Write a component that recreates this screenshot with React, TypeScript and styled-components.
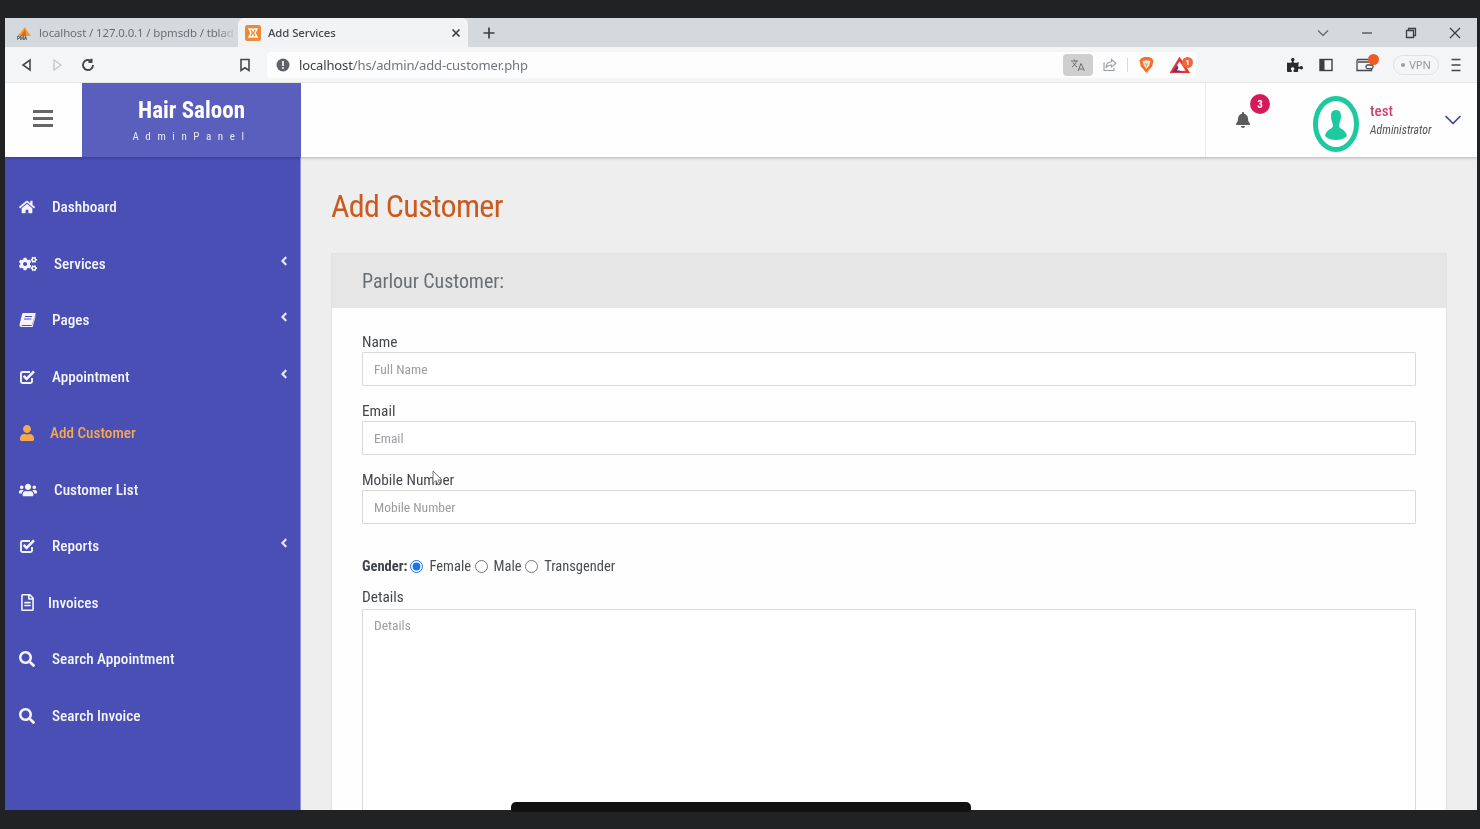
import React from 'react';
import styled, { createGlobalStyle } from 'styled-components';
import {
  FaAngleLeft,
  FaBell,
  FaCogs,
  FaHome,
  FaPuzzlePiece,
  FaRegFileAlt,
  FaSearch,
  FaUser,
  FaUsers,
} from 'react-icons/fa';
import { FiChevronDown } from 'react-icons/fi';

const GlobalStyle = createGlobalStyle`
  html, body {
    margin: 0;
    padding: 0;
    height: 100%;
    overflow: hidden;
    background: #202124;
  }
  * {
    box-sizing: border-box;
  }
`;

const Frame = styled.div`
  position: relative;
  width: 1480px;
  height: 829px;
  padding: 18px 3px 19px 5px;
  display: flex;
  flex-direction: column;
  background: #212224;
  overflow: hidden;
  filter: blur(0.35px);
`;

/* browser chrome */
const TabStrip = styled.div`
  height: 29px;
  flex: none;
  display: flex;
  align-items: stretch;
  background: #d3d9dc;
  font-family: 'Noto Sans', sans-serif;
  font-size: 11.4px;
  color: #45494d;
`;

const Tab = styled.div<{ $active?: boolean }>`
  width: ${(p) => (p.$active ? 230 : 233)}px;
  flex: none;
  display: flex;
  align-items: center;
  padding-left: ${(p) => (p.$active ? 7 : 11)}px;
  gap: 7px;
  background: ${(p) => (p.$active ? '#f1f3f4' : 'transparent')};
  border-radius: ${(p) => (p.$active ? '6px 6px 0 0' : '0')};
`;

const TabTitle = styled.span<{ $faded?: boolean }>`
  flex: 1;
  white-space: nowrap;
  letter-spacing: -0.1px;
  font-weight: ${(p) => (p.$faded ? 400 : 500)};
  color: ${(p) => (p.$faded ? '#6a6f74' : '#45494d')};
  ${(p) =>
    p.$faded &&
    'mask-image: linear-gradient(to right, #000 90%, transparent 99%);'}
`;

const TabClose = styled.span`
  width: 24px;
  flex: none;
  display: flex;
  justify-content: center;
  color: #33363a;
`;

const NewTab = styled.div`
  width: 42px;
  flex: none;
  display: flex;
  align-items: center;
  justify-content: center;
  color: #33363a;
`;

const StripSpacer = styled.div`
  flex: 1;
`;

const Slot = styled.div<{ $w: number }>`
  width: ${(p) => p.$w}px;
  flex: none;
  display: flex;
  align-items: center;
  justify-content: center;
  position: relative;
`;

const Toolbar = styled.div`
  height: 36px;
  flex: none;
  display: flex;
  align-items: center;
  padding-left: 7px;
  background: #f4f5f6;
  border-bottom: 1px solid #e4e6e8;
`;

const Omnibox = styled.div`
  width: 929px;
  height: 26px;
  flex: none;
  display: flex;
  align-items: center;
  padding-left: 9px;
  background: #fdfdfd;
  border-radius: 4px;
  font-family: 'Noto Sans', sans-serif;
  font-size: 13px;
  letter-spacing: -0.13px;
`;

const UrlHost = styled.span`
  margin-left: 9px;
  color: #3c4043;
`;

const UrlPath = styled.span`
  flex: 1;
  color: #70757a;
`;

const TranslateBtn = styled.div`
  width: 30px;
  height: 22px;
  flex: none;
  display: flex;
  align-items: center;
  justify-content: center;
  border-radius: 4px;
  background: #cfcfcf;
`;

const ToolSep = styled.div`
  width: 1px;
  height: 14px;
  flex: none;
  background: #d8d8d8;
`;

const Badge = styled.span<{ $size: number; $top: number; $right: number; $bg: string }>`
  position: absolute;
  top: ${(p) => p.$top}px;
  right: ${(p) => p.$right}px;
  width: ${(p) => p.$size}px;
  height: ${(p) => p.$size}px;
  border-radius: 50%;
  background: ${(p) => p.$bg};
  color: #fff;
  font-family: Roboto, sans-serif;
  font-size: ${(p) => (p.$size > 15 ? 11 : 8)}px;
  font-weight: 700;
  letter-spacing: 0;
  display: flex;
  align-items: center;
  justify-content: center;
`;

const VpnPill = styled.div`
  width: 46px;
  height: 20px;
  flex: none;
  display: flex;
  align-items: center;
  justify-content: center;
  gap: 4px;
  border: 1px solid #dfe1e3;
  border-radius: 10px;
  font-family: 'Noto Sans', sans-serif;
  font-size: 11px;
  color: #8f9499;
`;

const VpnDot = styled.span`
  width: 4px;
  height: 4px;
  border-radius: 50%;
  background: #9a9ea3;
`;

/* admin page */
const Page = styled.div`
  flex: 1;
  min-height: 0;
  display: flex;
  flex-direction: column;
  overflow: hidden;
  background: #eeeeee;
  font-family: Roboto, sans-serif;
  font-stretch: 75%;
`;

const TopBar = styled.header`
  height: 74px;
  flex: none;
  display: flex;
  background: #fefefe;
  box-shadow: 0 1px 3px rgba(0, 0, 0, 0.25);
  position: relative;
  z-index: 2;
`;

const MenuToggle = styled.div`
  width: 77px;
  flex: none;
  display: flex;
  align-items: center;
  justify-content: center;
  padding-right: 2px;
`;

const BurgerLines = styled.span`
  width: 20px;
  height: 17px;
  border-top: 3px solid #666;
  border-bottom: 3px solid #666;
  position: relative;
  margin-top: -3px;
  &::after {
    content: '';
    position: absolute;
    left: 0;
    right: 0;
    top: 4px;
    height: 3px;
    background: #666;
  }
`;

const Brand = styled.div`
  width: 219px;
  flex: none;
  display: flex;
  flex-direction: column;
  align-items: center;
  padding-top: 14px;
  background: #5a5fbd;
  color: #fff;
`;

const BrandName = styled.div`
  font-size: 23px;
  line-height: 27px;
  font-weight: 700;
`;

const BrandSub = styled.div`
  margin-top: 6px;
  font-size: 11px;
  line-height: 14px;
  letter-spacing: 6.6px;
  color: #e8e9f7;
`;

const TopBarFill = styled.div`
  flex: 1;
`;

const UserArea = styled.div`
  width: 272px;
  flex: none;
  display: flex;
  align-items: center;
  border-left: 1px solid #ececec;
`;

const BellWrap = styled.div`
  width: 76px;
  height: 100%;
  flex: none;
  position: relative;
  display: flex;
  align-items: center;
  justify-content: center;
  padding: 0 2px 0 0;
  color: #5c5c5c;
  font-size: 16px;
`;

const Avatar = styled.div`
  width: 46px;
  height: 56px;
  flex: none;
  margin-left: 31px;
  margin-top: 7px;
`;

const UserText = styled.div`
  width: 69px;
  flex: none;
  margin: -2px 0 0 11px;
`;

const UserName = styled.div`
  font-size: 15px;
  line-height: 20px;
  font-weight: 500;
  color: #c9446f;
`;

const UserRole = styled.div`
  margin-top: 1px;
  font-size: 11.8px;
  line-height: 16px;
  font-style: italic;
  white-space: nowrap;
  color: #555;
`;

const Body = styled.div`
  flex: 1;
  min-height: 0;
  display: flex;
`;

const Sidebar = styled.nav`
  width: 296px;
  flex: none;
  padding-top: 22px;
  background: #4a4fb5;
  border-right: 1px solid #8f92cf;
`;

const NavItem = styled.div<{ $active?: boolean }>`
  height: 56.5px;
  display: flex;
  align-items: center;
  padding: 0 14px;
  color: ${(p) => (p.$active ? '#f5a94f' : '#f4f5fc')};
`;

const NavIcon = styled.span`
  width: 18px;
  flex: none;
  display: flex;
  justify-content: flex-start;
`;

const NavLabel = styled.span<{ $offset: number }>`
  flex: 1;
  margin-left: ${(p) => p.$offset}px;
  font-size: 15.2px;
  font-weight: 500;
  white-space: nowrap;
`;

const NavCaret = styled.span`
  width: 12px;
  flex: none;
  display: flex;
  justify-content: center;
  margin-top: -6px;
  margin-right: -4px;
  font-size: 14px;
  color: #e7e8f7;
`;

const Main = styled.main`
  flex: 1;
  min-width: 0;
  padding: 29px 30px 0 30px;
  overflow: hidden;
`;

const PageTitle = styled.h1`
  margin: 0 0 27px 0;
  font-size: 32px;
  line-height: 40px;
  font-weight: 400;
  letter-spacing: -0.67px;
  color: #cb5a1f;
`;

const Card = styled.section`
  background: #fefefe;
  border: 1px solid #e2e2e2;
  border-bottom: 0;
`;

const CardHead = styled.div`
  height: 54px;
  display: flex;
  align-items: center;
  padding-left: 30px;
  background: #e6e6e6;
  font-size: 20px;
  letter-spacing: -0.05px;
  color: #6a6f73;
`;

const CardBody = styled.form`
  padding: 24px 30px 0 30px;
`;

const Field = styled.div`
  margin-bottom: 15px;
`;

const FieldLabel = styled.label`
  display: block;
  font-size: 15.3px;
  line-height: 20px;
  color: #44484c;
`;

const TextInput = styled.input`
  display: block;
  width: 100%;
  height: 34px;
  padding: 0 11px;
  border: 1px solid #d9d9d9;
  border-radius: 1px;
  background: #fff;
  font-family: inherit;
  font-stretch: inherit;
  font-size: 13.5px;
  &::placeholder {
    color: #9a9da0;
    opacity: 1;
  }
`;

const GenderRow = styled.div`
  height: 20px;
  margin: 32px 0 11px;
  display: flex;
  align-items: center;
  font-size: 14.5px;
  color: #4a4e52;
`;

const GenderTitle = styled.b`
  font-weight: 700;
  color: #3f4347;
`;

const Radio = styled.input`
  width: 13px;
  height: 13px;
  margin: 0 6px 0 ${(p) => (p.defaultChecked ? 3 : 2)}px;
  accent-color: #1a73e8;
`;

const GenderOption = styled.span`
  margin-right: 1.5px;
`;

const DetailsLabel = styled(FieldLabel)`
  margin-bottom: 2px;
`;

const Details = styled.textarea`
  display: block;
  width: 100%;
  height: 300px;
  padding: 7px 11px;
  border: 1px solid #d9d9d9;
  border-radius: 1px;
  resize: none;
  background: #fff;
  font-family: inherit;
  font-stretch: inherit;
  font-size: 13.5px;
  &::placeholder {
    color: #9a9da0;
    opacity: 1;
  }
`;

/* overlays from the screen recording */
const ScrollPill = styled.div`
  position: absolute;
  left: 511px;
  top: 802px;
  width: 460px;
  height: 10px;
  border-radius: 5px 5px 2px 2px;
  background: #111;
`;

const Cursor = styled.svg`
  position: absolute;
  left: 432px;
  top: 470px;
`;

const BookIcon = () => (
  <svg width="17" height="16" viewBox="0 0 17 16" fill="currentColor">
    <path d="M4.5 1 H16 C16.6 1 16.8 1.5 16.6 2 L13.6 12.2 C13.4 12.8 13 13 12.4 13 H3.4 C2.6 13 2.4 13.6 3 14 H12.6 L15.8 4 L16.6 4.6 L13.6 15 H2.6 C1 15 0.2 13.6 0.6 12.2 L3 2.4 C3.2 1.6 3.8 1 4.5 1 Z M6 4 L5.7 5 H13 L13.3 4 Z M5.2 6.6 L4.9 7.6 H12.2 L12.5 6.6 Z" fillRule="evenodd" />
  </svg>
);

const CheckSquareIcon = () => (
  <svg width="17" height="16" viewBox="0 0 17 16">
    <path
      d="M13 9 V12.5 C13 13.6 12.4 14 11.5 14 H3.5 C2.4 14 2 13.4 2 12.5 V4.5 C2 3.4 2.6 3 3.5 3 H11"
      fill="none"
      stroke="currentColor"
      strokeWidth="1.9"
    />
    <path d="M4.6 6.8 L7.6 9.8 L15 2.4" fill="none" stroke="currentColor" strokeWidth="2.6" />
  </svg>
);

const navItems = [
  { label: 'Dashboard', icon: <FaHome size={16} />, offset: 15 },
  { label: 'Services', icon: <FaCogs size={20} />, offset: 17, caret: true },
  { label: 'Pages', icon: <BookIcon />, offset: 15, caret: true },
  { label: 'Appointment', icon: <CheckSquareIcon />, offset: 15, caret: true },
  { label: 'Add Customer', icon: <FaUser size={16} />, offset: 13, active: true },
  { label: 'Customer List', icon: <FaUsers size={20} />, offset: 17 },
  { label: 'Reports', icon: <CheckSquareIcon />, offset: 15, caret: true },
  { label: 'Invoices', icon: <FaRegFileAlt size={17} />, offset: 11 },
  { label: 'Search Appointment', icon: <FaSearch size={16} />, offset: 15 },
  { label: 'Search Invoice', icon: <FaSearch size={16} />, offset: 15 },
];

const PmaIcon = () => (
  <svg width="16" height="14" viewBox="0 0 16 14">
    <path d="M1 10 C4 8 6 4 9 1 C10 4 13 7 15 10 Z" fill="#f29a2e" />
    <path d="M4 10 C6 8 8 6 9 3 L10 10 Z" fill="#d9661f" />
    <text x="1" y="14" fontSize="4.5" fontWeight="700" fontFamily="Roboto, sans-serif" fill="#444">
      PMA
    </text>
  </svg>
);

const XamppIcon = () => (
  <svg width="16" height="16" viewBox="0 0 16 16">
    <rect width="16" height="16" rx="2.5" fill="#ee8a35" />
    <path
      d="M4 4 L7 4 L8 6 L9 4 L12 4 L10 8 L12 12 L9 12 L8 10 L7 12 L4 12 L6 8 Z"
      fill="none"
      stroke="#fff"
      strokeWidth="1.4"
    />
  </svg>
);

const Glyph = ({ d, size = 16, color = '#3c4043', width = 1.6 }: { d: string; size?: number; color?: string; width?: number }) => (
  <svg width={size} height={size} viewBox="0 0 16 16" fill="none" stroke={color} strokeWidth={width}>
    <path d={d} />
  </svg>
);

const App = () => (
  <Frame>
    <GlobalStyle />
    <TabStrip>
      <Tab>
        <PmaIcon />
        <TabTitle $faded>localhost / 127.0.0.1 / bpmsdb / tblad</TabTitle>
      </Tab>
      <Tab $active>
        <XamppIcon />
        <TabTitle>Add Services</TabTitle>
        <TabClose>
          <Glyph d="M4.5 4.5 L11.5 11.5 M11.5 4.5 L4.5 11.5" width={1.7} />
        </TabClose>
      </Tab>
      <NewTab>
        <Glyph d="M8 2.5 V13.5 M2.5 8 H13.5" width={1.7} />
      </NewTab>
      <StripSpacer />
      <Slot $w={44}>
        <Glyph d="M3 5.5 L8 10.5 L13 5.5" color="#5f6368" width={1.2} />
      </Slot>
      <Slot $w={44}>
        <Glyph d="M3 8 H13" color="#3c4043" width={1.2} />
      </Slot>
      <Slot $w={44}>
        <Glyph d="M3.5 5.5 H10.5 V12.5 H3.5 Z M5.5 5.5 V3.5 H12.5 V10.5 H10.5" color="#3c4043" width={1.3} />
      </Slot>
      <Slot $w={44}>
        <Glyph d="M3 3 L13 13 M13 3 L3 13" color="#3c4043" width={1.3} />
      </Slot>
    </TabStrip>

    <Toolbar>
      <Slot $w={30}>
        <Glyph d="M11 3 V13 L4 8 Z" color="#45494d" />
      </Slot>
      <Slot $w={30}>
        <Glyph d="M5 3 V13 L12 8 Z" color="#c4c7ca" width={1.3} />
      </Slot>
      <Slot $w={31}>
        <Glyph d="M13 8 A5 5 0 1 1 11.3 4.2 M11.6 1.8 V5 H8.4" color="#45494d" width={1.9} />
      </Slot>
      <Slot $w={127} />
      <Slot $w={30}>
        <Glyph d="M4 2.5 H12 V13.5 L8 10.8 L4 13.5 Z" color="#45494d" />
      </Slot>
      <Slot $w={7} />
      <Omnibox>
        <svg width="14" height="14" viewBox="0 0 14 14">
          <circle cx="7" cy="7" r="6.5" fill="#5f6368" />
          <rect x="6.2" y="3" width="1.6" height="5" fill="#fff" />
          <rect x="6.2" y="9.2" width="1.6" height="1.7" fill="#fff" />
        </svg>
        <UrlHost>localhost</UrlHost>
        <UrlPath>/hs/admin/add-customer.php</UrlPath>
        <TranslateBtn>
          <svg width="16" height="14" viewBox="0 0 16 14" fill="none" stroke="#6a6d70" strokeWidth="1">
            <path d="M1 3 H8 M4.5 1.5 V3 M2 9 C4.5 7.5 6 5 6.5 3 M3 4.5 C4 6.5 5.5 8 7 9" />
            <path d="M8 13 L11 5.5 L14.5 13 M9.2 11 H13.2" />
          </svg>
        </TranslateBtn>
        <Slot $w={34}>
          <Glyph d="M9.5 2.5 L14 6.5 L9.5 10 V8 C7 8 5 9 4 11 C4 7.5 6 5 9.5 4.8 Z M3 6 H2 V13.5 H12 V11" color="#9a9ea3" width={1.1} />
        </Slot>
        <ToolSep />
        <Slot $w={36}>
          <svg width="15" height="18" viewBox="0 0 17 19">
            <path d="M3 1.5 L6 0.5 H11 L14 1.5 L16.5 4 L15 11 L8.5 18.5 L2 11 L0.5 4 Z" fill="#f0702c" />
            <path d="M4 5 L8.5 4 L13 5 L11.5 10 L8.5 14 L5.5 10 Z" fill="#fbe6d4" />
            <path d="M6.5 7 L8.5 8 L10.5 7 L8.5 12 Z" fill="#f3a35f" />
          </svg>
        </Slot>
        <Slot $w={32}>
          <svg width="20" height="16" viewBox="0 0 20 16">
            <path d="M9.5 2 L18 15 H1.5 Z" fill="none" stroke="#e2362f" strokeWidth="2.4" />
            <path d="M7 8 L11 15 H2.5 Z" fill="#662d91" />
            <path d="M10 8 L13.5 13.6 H7 Z" fill="#fff" />
          </svg>
          <Badge $size={11} $top={0} $right={3} $bg="#f1663a">1</Badge>
        </Slot>
      </Omnibox>
      <Slot $w={84} />
      <Slot $w={30}>
        <FaPuzzlePiece size={16} color="#2a2c2e" />
      </Slot>
      <Slot $w={31}>
        <svg width="14" height="14" viewBox="0 0 14 14">
          <rect x="1" y="1.5" width="12" height="11" fill="none" stroke="#3c4043" strokeWidth="1.4" />
          <rect x="1" y="1.5" width="4.5" height="11" fill="#3c4043" />
        </svg>
      </Slot>
      <Slot $w={48}>
        <svg width="18" height="14" viewBox="0 0 18 14" fill="none" stroke="#45494d" strokeWidth="1.3">
          <path d="M13 1.5 H2 C1 1.5 1 2.5 1 3 V12.5 H15.5 V4 H2" />
          <rect x="10" y="7" width="7" height="3.6" rx="1.5" fill="#f4f5f6" />
        </svg>
        <Badge $size={11} $top={-4} $right={10} $bg="#f15a22" />
      </Slot>
      <Slot $w={4} />
      <VpnPill>
        <VpnDot />
        VPN
      </VpnPill>
      <Slot $w={34}>
        <Glyph d="M3.5 2.5 H12.5 M3.5 8 H12.5 M3.5 13.5 H12.5" color="#45494d" width={1.7} />
      </Slot>
    </Toolbar>

    <Page>
      <TopBar>
        <MenuToggle>
          <BurgerLines />
        </MenuToggle>
        <Brand>
          <BrandName>Hair Saloon</BrandName>
          <BrandSub>AdminPanel</BrandSub>
        </Brand>
        <TopBarFill />
        <UserArea>
          <BellWrap>
            <FaBell />
            <Badge $size={20} $top={11} $right={12} $bg="#d41a5b">3</Badge>
          </BellWrap>
          <Avatar>
            <svg width="46" height="56" viewBox="0 0 46 56">
              <ellipse cx="23" cy="28" rx="20.5" ry="25.5" fill="none" stroke="#1fc9a0" strokeWidth="5" />
              <path
                d="M23 14 C27 14 28 17 28 20 C28 25 26 27 26 30 C26 33 33 33 34 40 C31 43 27 44 23 44 C19 44 15 43 12 40 C13 33 20 33 20 30 C20 27 18 25 18 20 C18 17 19 14 23 14 Z"
                fill="#1fc9a0"
              />
            </svg>
          </Avatar>
          <UserText>
            <UserName>test</UserName>
            <UserRole>Administrator</UserRole>
          </UserText>
          <FiChevronDown size={28} color="#3d4199" strokeWidth={1.5} />
        </UserArea>
      </TopBar>
      <Body>
        <Sidebar>
          {navItems.map((item) => (
            <NavItem key={item.label} $active={item.active}>
              <NavIcon>{item.icon}</NavIcon>
              <NavLabel $offset={item.offset}>{item.label}</NavLabel>
              {item.caret && (
                <NavCaret>
                  <FaAngleLeft />
                </NavCaret>
              )}
            </NavItem>
          ))}
        </Sidebar>
        <Main>
          <PageTitle>Add Customer</PageTitle>
          <Card>
            <CardHead>Parlour Customer:</CardHead>
            <CardBody>
              <Field>
                <FieldLabel>Name</FieldLabel>
                <TextInput placeholder="Full Name" />
              </Field>
              <Field>
                <FieldLabel>Email</FieldLabel>
                <TextInput placeholder="Email" />
              </Field>
              <Field>
                <FieldLabel>Mobile Number</FieldLabel>
                <TextInput placeholder="Mobile Number" />
              </Field>
              <GenderRow>
                <GenderTitle>Gender:</GenderTitle>
                <Radio type="radio" name="gender" defaultChecked />
                <GenderOption>Female</GenderOption>
                <Radio type="radio" name="gender" />
                <GenderOption>Male</GenderOption>
                <Radio type="radio" name="gender" />
                <GenderOption>Transgender</GenderOption>
              </GenderRow>
              <DetailsLabel>Details</DetailsLabel>
              <Details placeholder="Details" />
            </CardBody>
          </Card>
        </Main>
      </Body>
    </Page>

    <ScrollPill />
    <Cursor width="12" height="17" viewBox="0 0 12 17">
      <path d="M1 1 V13 L4 10.5 L6 15 L8 14 L6 10 H10 Z" fill="#fff" stroke="#777" strokeWidth="1" />
    </Cursor>
  </Frame>
);

export default App;
